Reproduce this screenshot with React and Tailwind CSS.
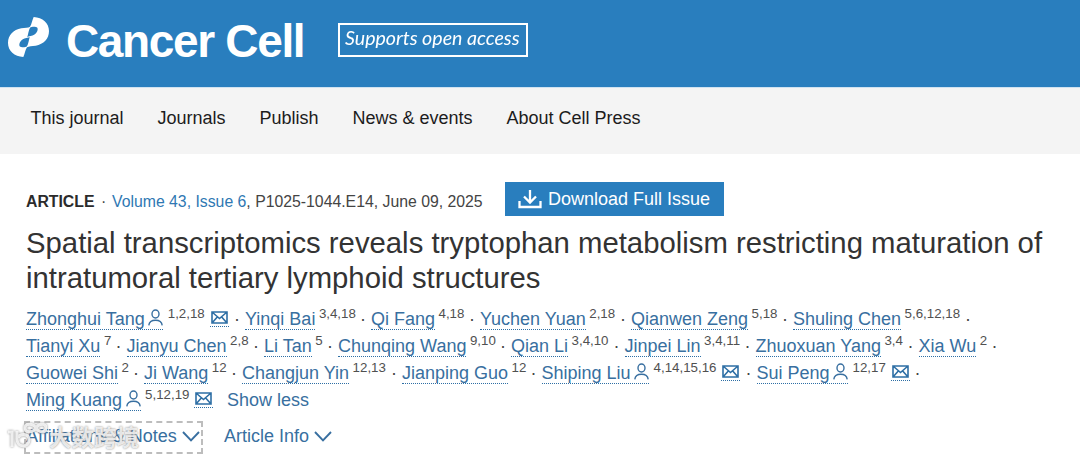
const navItems = [
  { label: "This journal", width: "w-[127px]" },
  { label: "Journals", width: "w-[102px]" },
  { label: "Publish", width: "w-[93px]" },
  { label: "News & events", width: "w-[154px]" },
  { label: "About Cell Press", width: "w-[140px]" },
];

const authorRows = [
  [
    { name: "Zhonghui Tang", notes: "1,2,18", width: "w-[219px]", contact: true },
    { name: "Yinqi Bai", notes: "3,4,18", width: "w-[126px]" },
    { name: "Qi Fang", notes: "4,18", width: "w-[109px]" },
    { name: "Yuchen Yuan", notes: "2,18", width: "w-[151px]" },
    { name: "Qianwen Zeng", notes: "5,18", width: "w-[162px]" },
    { name: "Shuling Chen", notes: "5,6,12,18", width: "w-[183px]" },
  ],
  [
    { name: "Tianyi Xu", notes: "7", width: "w-[100.5px]" },
    { name: "Jianyu Chen", notes: "2,8", width: "w-[137.5px]" },
    { name: "Li Tan", notes: "5", width: "w-[74px]" },
    { name: "Chunqing Wang", notes: "9,10", width: "w-[173px]" },
    { name: "Qian Li", notes: "3,4,10", width: "w-[113.5px]" },
    { name: "Jinpei Lin", notes: "3,4,11", width: "w-[131px]" },
    { name: "Zhuoxuan Yang", notes: "3,4", width: "w-[163px]" },
    { name: "Xia Wu", notes: "2", width: "w-[84px]" },
  ],
  [
    { name: "Guowei Shi", notes: "2", width: "w-[118px]" },
    { name: "Ji Wang", notes: "12", width: "w-[98px]" },
    { name: "Changjun Yin", notes: "12,13", width: "w-[160px]" },
    { name: "Jianping Guo", notes: "12", width: "w-[139.5px]" },
    { name: "Shiping Liu", notes: "4,14,15,16", width: "w-[215px]", contact: true },
    { name: "Sui Peng", notes: "12,17", width: "w-[169px]", contact: true },
  ],
  [{ name: "Ming Kuang", notes: "5,12,19", width: "w-[201px]", contact: true, last: true }],
];

const CellLogo = () => (
  <svg className="w-[41px] h-10 shrink-0" viewBox="24 52 123 120" fill="white" fillRule="evenodd">
    <path d="M101 52C128 54 147 70 147 94C147 118 131 133 107 138C96 140 86 139 81 143C76 149 75 162 70 172C43 170 24 154 24 130C24 106 40 91 64 86C75 84 85 85 90 81C95 75 96 62 101 52ZM90 84C95 80 108 80 112 84C116 92 108 106 92 109C86 110 84 111 82 113C84 104 86 92 90 84ZM81 140C76 144 63 144 59 140C55 132 63 118 79 115C85 114 87 113 89 111C87 120 85 132 81 140Z" />
  </svg>
);

const PersonIcon = () => (
  <svg className="w-[15px] h-[17px] ml-[3.5px] -mt-[4px] shrink-0" viewBox="0 0 15 17" fill="none" stroke="currentColor" strokeWidth="1.4">
    <ellipse cx="7.5" cy="5" rx="3.5" ry="4" />
    <path d="M.8 16.3C1.2 12.8 3.7 11.2 7.5 11.2S13.8 12.8 14.2 16.3" />
  </svg>
);

const MailIcon = () => (
  <svg className="w-[17px] h-[13px]" viewBox="0 0 17 13" fill="none" stroke="currentColor" strokeWidth="1.6">
    <path d="M1 1H16V12H1ZM1 1L8.5 7.5L16 1M1 12L6.3 6M16 12L10.7 6" />
  </svg>
);

const DownloadIcon = () => (
  <svg className="w-6 h-[19px]" viewBox="0 0 24 19" fill="none" stroke="currentColor" strokeWidth="2.3">
    <path d="M1.5 11V17H22.5V11M12 0V12M6 6.5L12 12.5L18 6.5" />
  </svg>
);

const Chevron = () => (
  <svg className="ml-[5px] w-[18px] h-[11px] shrink-0" viewBox="0 0 18 11" fill="none" stroke="currentColor" strokeWidth="1.9">
    <path d="M1 1L9 9.3L17 1" />
  </svg>
);

const Author = ({ name, notes, width, contact, last }) => (
  <div className={`flex items-start shrink-0 whitespace-nowrap ${width}`}>
    <a className="flex items-center h-[25px] pt-[5px] border-b border-dotted border-[#2e6fa5] text-[#386fa0]">
      {name}
      {contact && <PersonIcon />}
    </a>
    <span className={`text-[13.3px] leading-[18px] text-[#505050] ${contact ? "ml-[4.5px]" : "ml-[3.5px]"}`}>{notes}</span>
    {contact && (
      <a className="ml-[5px] mt-[3px] h-[19px] w-[19px] flex justify-center items-center border-b border-dotted border-[#2e6fa5] text-[#2e6fa5]">
        <MailIcon />
      </a>
    )}
    {!last && <span className="ml-auto mr-[5px] mt-px text-[#444]">·</span>}
  </div>
);

// semi-transparent site mark laid over the affiliations toggle
const Watermark = () => (
  <div className="absolute -left-[17px] top-0 flex items-center h-[30px] text-white/80 pointer-events-none">
    <svg className="w-[40px] h-[30px] drop-shadow-[0_0_1px_#777]" viewBox="0 0 40 30" fill="none" stroke="currentColor" strokeWidth="3">
      <path d="M1 11H5V26M10 10V18C10 27 22 27 22 19C22 12 13 12 11 17" />
      <path d="M29 7C26 2 18 2 18 7C18 12 26 12 29 7C32 2 39 2 39 7C39 12 32 12 29 7Z" />
    </svg>
    <span className="ml-[2px] text-[22.5px] leading-[30px] font-bold font-['Noto_Sans_CJK_SC',sans-serif] [text-shadow:0_0_2px_#777]">大数跨境</span>
  </div>
);

const App = () => {
  return (
    <div className="w-[1080px] h-[455px] overflow-hidden bg-white font-['Liberation_Sans',Arial,sans-serif]">
      {/* Journal header */}
      <header className="h-[88px] flex items-start bg-[#297ebe] border-b border-[#cfe2f1] pl-2">
        <div className="mt-[17px]">
          <CellLogo />
        </div>
        <div className="ml-[17px] mt-[15px] w-[272px] text-[46px] leading-[52px] font-bold tracking-[-1.35px] text-white whitespace-nowrap">
          Cancer Cell
        </div>
        <div className="mt-[23px] w-[190px] h-[34px] shrink-0 border-2 border-white pl-[5px] text-[20px] leading-[25px] italic text-white whitespace-nowrap font-['Lato',sans-serif]">
          <span className="inline-block origin-left scale-x-[0.98]">Supports open access</span>
        </div>
      </header>

      <nav className="h-[66px] flex items-center bg-[#f4f4f4] pl-[30.5px] pb-[6px] text-[18px] text-[#1c1c1c]">
        {navItems.map(({ label, width }) => (
          <a key={label} className={`shrink-0 whitespace-nowrap ${width}`}>{label}</a>
        ))}
      </nav>

      <main className="pl-[26px] pt-[28px]">
        {/* Issue details */}
        <div className="flex items-center h-[34px] text-[15.8px] text-[#444] whitespace-nowrap">
          <div className="flex w-[479px] pt-[5px]">
            <span className="w-[75px] font-bold text-[#2b2b2b]">ARTICLE</span>
            <span className="w-[11px]">·</span>
            <span><a className="text-[#2f78b3]">Volume 43, Issue 6</a>, P1025-1044.E14, June 09, 2025</span>
          </div>
          <button className="flex items-center w-[219px] h-[34px] pl-[13px] gap-[6px] bg-[#297ebe] text-[18px] text-white">
            <DownloadIcon />
            Download Full Issue
          </button>
        </div>

        <h1 className="mt-[9px] text-[29.3px] leading-[35px] text-[#333]">
          Spatial transcriptomics reveals tryptophan metabolism restricting maturation of
          <br />
          intratumoral tertiary lymphoid structures
        </h1>

        <div className="mt-[10px] text-[18px] leading-[27px]">
          {authorRows.map((row, i) => (
            <div key={i} className="flex h-[27px]">
              {row.map((author) => (
                <Author key={author.name} {...author} />
              ))}
              {i === authorRows.length - 1 && <a className="mt-px text-[#386fa0]">Show less</a>}
            </div>
          ))}
        </div>

        {/* Section toggles */}
        <div className="relative flex mt-[8px] -ml-[2px] text-[18px] leading-[27px] text-[#386fa0] whitespace-nowrap">
          <button className="flex items-center w-[179px] h-[33px] pb-[3px] border-2 border-dashed border-[#bdbdbd]">
            Affiliations & Notes
            <Chevron />
          </button>
          <button className="flex items-center ml-[21px] h-[33px] pb-[3px]">
            Article Info
            <Chevron />
          </button>
          <Watermark />
        </div>
      </main>
    </div>
  );
};

export default App;
